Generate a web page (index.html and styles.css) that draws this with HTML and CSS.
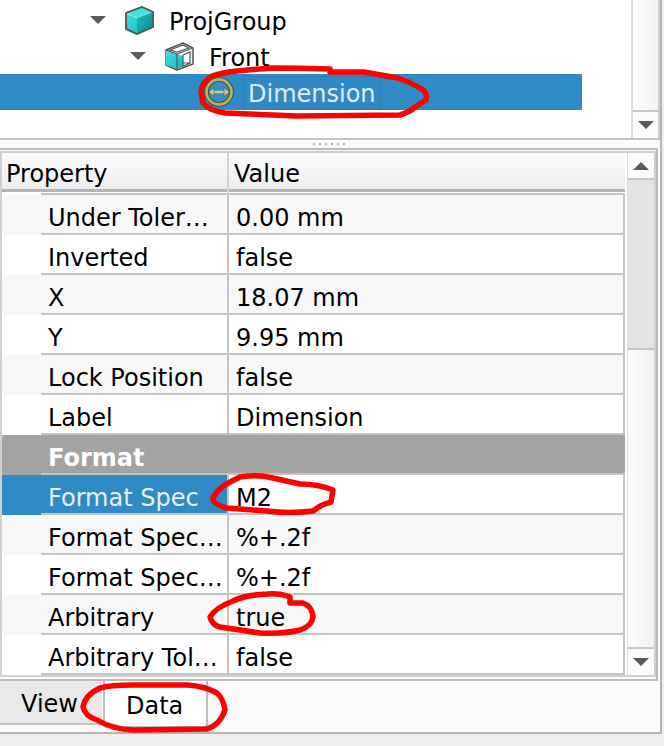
FILE: index.html
```html
<!DOCTYPE html>
<html lang="en">
<head>
  <meta charset="UTF-8" />
  <title>Property view</title>
  <link rel="stylesheet" href="styles.css">
</head>
<body>
  <svg width="0" height="0" class="defs">
    <defs>
      <linearGradient id="teal" x1="0" y1="0" x2="1" y2="1">
        <stop offset="0" stop-color="#3fe3e3" />
        <stop offset="1" stop-color="#17b5bb" />
      </linearGradient>
      <linearGradient id="tealDark" x1="0" y1="0" x2="1" y2="1">
        <stop offset="0" stop-color="#1cc4c8" />
        <stop offset="1" stop-color="#0d8088" />
      </linearGradient>
    </defs>
  </svg>

  <div class="window">
    <div class="tree">
      <div class="tree-body">
        <div class="tree-row level-1">
          <span class="arrow"></span>
          <svg class="tree-icon" width="30" height="30" viewBox="0 0 30 30">
            <path d="M2 8 L18 2 L29 7 L29 22 L13 29 L2 24 Z" fill="url(#teal)" stroke="#555" stroke-width="1.5" stroke-linejoin="round" />
            <path d="M2 8 L18 2 L29 7 L13 13 Z" fill="#3fe3e3" stroke="#dff" stroke-width="0.6" stroke-linejoin="round" />
            <path d="M13 13 L29 7 L29 22 L13 29 Z" fill="url(#tealDark)" />
            <path d="M2 8 L18 2 L29 7 L29 22 L13 29 L2 24 Z" fill="none" stroke="#555" stroke-width="1.5" stroke-linejoin="round" />
          </svg>
          <span class="tree-label">ProjGroup</span>
        </div>
        <div class="tree-row level-2">
          <span class="arrow"></span>
          <svg class="tree-icon" width="30" height="30" viewBox="0 0 30 30">
            <path d="M2 9 L19 2 L29 7 L29 23 L13 29 L2 24 Z" fill="#fff" stroke="#555" stroke-width="1.5" stroke-linejoin="round" />
            <path d="M2 10 L19 15 L19 26 L13 28 L2 24 Z" fill="url(#teal)" />
            <path d="M2 9 L13 13 L29 7 M13 13 L13 28 M6 9 L19 4 L25 7 L13 11 Z M19 14 L26 11 L26 22 L19 25 Z M19 22 L26 22" fill="none" stroke="#555" stroke-width="1.2" />
          </svg>
          <span class="tree-label">Front</span>
        </div>
        <div class="tree-row level-3 selected">
          <svg class="tree-icon dim-icon" width="30" height="30" viewBox="0 0 30 30">
            <circle cx="15" cy="15" r="12.5" fill="#3a8cc4" stroke="#3d4a3a" stroke-width="4.6" />
            <circle cx="15" cy="15" r="12.5" fill="none" stroke="#b3b368" stroke-width="2.8" />
            <path d="M8 15 L22 15" stroke="#c9cf80" stroke-width="2.4" />
            <path d="M10 10.5 L4.5 15 L10 19.5 Z M20 10.5 L25.5 15 L20 19.5 Z" fill="#c9cf80" stroke="#4c5a3a" stroke-width="0.7" />
          </svg>
          <span class="tree-label dim-label">Dimension</span>
        </div>
      </div>
      <div class="scrollbar tree-scroll">
        <div class="scroll-fill"></div>
        <div class="scroll-btn"><span class="arrow"></span></div>
      </div>
    </div>

    <div class="splitter"><span class="dots"></span></div>

    <div class="panel">
      <div class="frame">
        <div class="table">
          <div class="head">
            <div class="head-cell">Property</div>
            <div class="head-cell">Value</div>
          </div>
          <div class="head-gap"></div>

          <div class="row alt"><div class="name"><span>Under Toler…</span></div><div class="value"><span>0.00 mm</span></div></div>
          <div class="row"><div class="name"><span>Inverted</span></div><div class="value"><span>false</span></div></div>
          <div class="row alt"><div class="name"><span>X</span></div><div class="value"><span>18.07 mm</span></div></div>
          <div class="row"><div class="name"><span>Y</span></div><div class="value"><span>9.95 mm</span></div></div>
          <div class="row alt"><div class="name"><span>Lock Position</span></div><div class="value"><span>false</span></div></div>
          <div class="row"><div class="name"><span>Label</span></div><div class="value"><span>Dimension</span></div></div>
          <div class="group"><span>Format</span></div>
          <div class="row selected"><div class="name"><span>Format Spec</span></div><div class="value"><span>M2</span></div></div>
          <div class="row alt"><div class="name"><span>Format Spec…</span></div><div class="value"><span>%+.2f</span></div></div>
          <div class="row"><div class="name"><span>Format Spec…</span></div><div class="value"><span>%+.2f</span></div></div>
          <div class="row alt"><div class="name"><span>Arbitrary</span></div><div class="value"><span>true</span></div></div>
          <div class="row"><div class="name"><span>Arbitrary Tol…</span></div><div class="value"><span>false</span></div></div>
        </div>

        <div class="scrollbar table-scroll">
          <div class="scroll-btn up"><span class="arrow"></span></div>
          <div class="scroll-handle"></div>
          <div class="scroll-fill"></div>
          <div class="scroll-btn"><span class="arrow"></span></div>
        </div>
      </div>
    </div>

    <div class="tabs">
      <div class="tab">View</div>
      <div class="tab active">Data</div>
    </div>
  </div>

  <!-- red pen marks on top of the screenshot -->
  <svg class="marks" width="664" height="746" viewBox="0 0 664 746">
    <path d="M330 72 L330 69 Q300 68 271 68 L237 71 Q220 73 212 76 Q201 83 201 92 L203 103 Q210 111 225 113 L297 116 L400 115 Q410 112 415 107 L426 100 Q428 92 420 88 Q410 82 398 78 L364 72 Z" />
    <path d="M240 477 Q258 474 273 478 L300 484 Q318 484 333 490 L331 502 Q322 504 313 511 Q290 514 267 511 L227 508 Q212 504 213 498 Q218 488 230 482 Z" />
    <path d="M290 597 Q280 593 267 594 Q245 595 233 601 Q215 608 210 617 Q212 625 220 627 L260 633 Q285 634 300 630 Q312 626 313 617 Q312 606 303 603 L290 603 Z" />
    <path d="M133 685 Q110 685 100 688 Q85 695 83 707 Q85 716 97 720 Q112 729 133 730 L207 729 Q220 725 225 710 Q223 698 217 693 Q205 686 187 685 Z" />
  </svg>
</body>
</html>
```

FILE: styles.css
```css
* {
  box-sizing: border-box;
}

html, body {
  margin: 0;
  height: 746px;
  overflow: hidden;
}

body {
  position: relative;
  width: 664px;
  background: #efefef;
  color: #000;
  font-family: "DejaVu Sans", sans-serif;
  font-size: 24px;
}

.defs {
  position: absolute;
}

.marks {
  position: absolute;
  top: 0;
  left: 0;
}

.marks path {
  fill: none;
  stroke: #f00;
  stroke-width: 5.5;
  stroke-linejoin: round;
}

.window {
  width: 662px;
  height: 734px;
  background: #fbfbfb;
  border-right: 2px solid #b4b4b4;
  border-bottom: 2px solid #b4b4b4;
}

/* tree */
.tree {
  display: flex;
  height: 138px;
  background: #fff;
}

.tree-body {
  flex: 1;
  padding-top: 2px;
  width: 631px;
}

.tree-row {
  display: flex;
  align-items: center;
  height: 36px;
  width: 582px;
}

.tree-label {
  padding-top: 4px;
}

.level-1 {
  padding-left: 90px;
}

.level-2 {
  padding-left: 130px;
}

.level-3 {
  padding-left: 204px;
}

.tree-row .tree-icon {
  flex: none;
}

.level-1 .tree-icon {
  margin-left: 18px;
  margin-right: 15px;
}

.level-2 .tree-icon {
  margin-left: 18px;
  margin-right: 15px;
}

.arrow {
  display: block;
  flex: none;
  width: 0;
  height: 0;
  border-left: 8px solid transparent;
  border-right: 8px solid transparent;
  border-top: 8px solid #5a5a5a;
}

.tree-row.selected {
  background: #2f8ac6;
  color: #dcecf8;
}

.dim-label {
  margin-left: 9px;
  margin-top: 2px;
  padding: 0 4px;
  height: 34px;
  line-height: 35px;
  width: 138px;
  background: #3188c4;
  border: 1px solid #2a7db5;
}

.scrollbar {
  display: flex;
  flex-direction: column;
  background: #fafafa;
}

.tree-scroll {
  width: 29px;
  border-left: 2px solid #dcdcdc;
  border-right: 2px solid #cfcfcf;
}

.scroll-fill {
  flex: 1;
  background: linear-gradient(to right, #fdfdfd, #f2f2f2);
}

.scroll-btn {
  display: flex;
  align-items: center;
  justify-content: center;
  flex: none;
  height: 28px;
  background: #fbfbfb;
  border-top: 2px solid #c8c8c8;
}

.scroll-btn.up {
  height: 27px;
  border-top: 0;
  border-bottom: 2px solid #c8c8c8;
}

.scroll-btn.up .arrow {
  border-top: 0;
  border-bottom: 8px solid #5a5a5a;
}

/* splitter */
.splitter {
  display: flex;
  justify-content: center;
  align-items: center;
  height: 10px;
  border-top: 2px solid #c4c4c4;
}

.dots {
  width: 34px;
  height: 2px;
  background: repeating-linear-gradient(to right, #b0b0b0 0 2px, transparent 2px 6px);
}

/* property table */
.panel {
  height: 533px;
  padding-top: 1px;
  border-top: 2px solid #bcbcbc;
  border-bottom: 2px solid #bcbcbc;
  border-right: 2px solid #bcbcbc;
  width: 658px;
  background: #fbfbfb;
}

.frame {
  display: flex;
  height: 526px;
  border: 2px solid #cfcfcf;
  background: #fff;
}

.table {
  flex: none;
  width: 623px;
  margin-right: 2px;
}

.head {
  display: grid;
  grid-template-columns: 225px 1fr;
  height: 39px;
  background: linear-gradient(to bottom, #fbfbfb, #eeeeee);
  border-bottom: 3px solid #b4b4b4;
}

.head-cell {
  padding-left: 5px;
  line-height: 43px;
  border-left: 2px solid #d2d2d2;
}

.head-cell:first-child {
  padding-left: 4px;
  border-left: 0;
}

.head-gap {
  height: 3px;
  margin-left: 39px;
  border-bottom: 2px solid #c4c4c4;
}

.row {
  display: grid;
  grid-template-columns: 225px 1fr;
  height: 40px;
}

.row.alt {
  background: #f7f7f7;
}

.name {
  padding-left: 39px;
}

.name span,
.value span {
  display: block;
  height: 40px;
  line-height: 47px;
  border-bottom: 2px solid #c4c4c4;
}

.name span {
  padding-left: 7px;
}

.value {
  border-left: 2px solid #c4c4c4;
  border-right: 2px solid #c4c4c4;
}

.value span {
  padding-left: 7px;
}

.row.selected .name {
  background: #2f8ac6;
  color: #e6f1f9;
}

.group {
  height: 40px;
  padding-left: 39px;
  background: #a3a3a3;
  color: #fff;
  font-weight: bold;
}

.group span {
  display: block;
  height: 40px;
  padding-left: 7px;
  line-height: 47px;
  border-bottom: 2px solid #c4c4c4;
}

.table-scroll {
  width: 27px;
  border-left: 1px solid #dcdcdc;
}

.scroll-handle {
  flex: none;
  height: 170px;
  background: #e3e3e3;
  border-bottom: 2px solid #c4c4c4;
}

/* tabs */
.tabs {
  display: flex;
  align-items: flex-start;
  height: 51px;
}

.tab {
  height: 44px;
  width: 102px;
  padding-left: 21px;
  line-height: 46px;
  background: #e8e8e8;
  border-bottom: 2px solid #c4c4c4;
}

.tab.active {
  height: 47px;
  width: 105px;
  margin-left: 1px;
  padding-left: 21px;
  line-height: 50px;
  background: #fff;
  border-left: 2px solid #bcbcbc;
  border-right: 2px solid #bcbcbc;
  border-bottom: 2px solid #bcbcbc;
  border-bottom-left-radius: 4px;
  border-bottom-right-radius: 4px;
}
```
